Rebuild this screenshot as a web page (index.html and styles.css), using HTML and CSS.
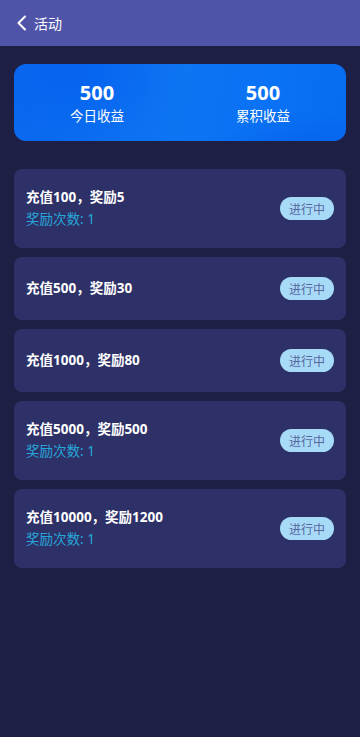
FILE: index.html
```html
<!DOCTYPE html>
<html lang="zh-CN">
<head>
<meta charset="utf-8">
<meta name="viewport" content="width=device-width, initial-scale=1">
<title>活动</title>
<link rel="stylesheet" href="styles.css">
</head>
<body>
<header class="topbar">
  <svg class="back" width="12" height="16" viewBox="0 0 12 16"><path d="M9 1.5 L2.5 8 L9 14.5" fill="none" stroke="#fff" stroke-width="2" stroke-linecap="round" stroke-linejoin="round"/></svg>
  <span class="title">活动</span>
</header>
<main class="content">
  <section class="banner">
    <div class="stat"><div class="num">500</div><div class="label">今日收益</div></div>
    <div class="stat"><div class="num">500</div><div class="label">累积收益</div></div>
  </section>
  <ul class="list">
    <li class="item"><div class="info"><div class="name">充值100，奖励5</div><div class="sub">奖励次数: 1</div></div><span class="badge">进行中</span></li>
    <li class="item"><div class="info"><div class="name">充值500，奖励30</div></div><span class="badge">进行中</span></li>
    <li class="item"><div class="info"><div class="name">充值1000，奖励80</div></div><span class="badge">进行中</span></li>
    <li class="item"><div class="info"><div class="name">充值5000，奖励500</div><div class="sub">奖励次数: 1</div></div><span class="badge">进行中</span></li>
    <li class="item"><div class="info"><div class="name">充值10000，奖励1200</div><div class="sub">奖励次数: 1</div></div><span class="badge">进行中</span></li>
  </ul>
</main>
</body>
</html>
```
FILE: styles.css
```css
* { box-sizing: border-box; }
html, body { margin: 0; padding: 0; }
body {
  background: #1d1f45;
  min-height: 737px;
  font-family: "Noto Sans", "Noto Sans CJK SC", sans-serif;
  color: #fff;
}
.topbar {
  height: 46px;
  background: #5054a9;
  display: flex;
  align-items: center;
  padding-left: 16px;
}
.back { margin-right: 6px; }
.title { font-size: 14px; color: #fff; }
.content { padding: 18px 14px; }
.banner {
  height: 77px;
  border-radius: 12px;
  display: flex;
  align-items: center;
  background:
    radial-gradient(ellipse 160px 90px at 290px 110px, rgba(0,80,230,0.55), rgba(0,80,230,0) 70%),
    radial-gradient(ellipse 140px 110px at 60px 10px, rgba(0,90,240,0.5), rgba(0,90,240,0) 70%),
    linear-gradient(100deg, #0a68ee 0%, #0d74f2 50%, #0a72f4 75%, #066cf0 100%);
}
.stat { flex: 1; text-align: center; }
.num { font-size: 20px; font-weight: 700; line-height: 24px; padding-top: 2px; }
.label { font-size: 13.5px; line-height: 20px; margin-top: 1px; }
.list { list-style: none; margin: 28px 0 0; padding: 0; display: flex; flex-direction: column; gap: 9px; }
.item {
  background: #2e3168;
  border-radius: 8px;
  padding: 0 12px;
  display: flex;
  align-items: center;
  justify-content: space-between;
  min-height: 63px;
}
.info { display: flex; flex-direction: column; padding: 19px 0; }
.name { font-size: 13.5px; font-weight: 700; line-height: 19px; height: 19px; }
.sub { font-size: 13.5px; line-height: 19px; height: 19px; margin-top: 3px; color: #26a8d8; }
.badge {
  height: 23px;
  width: 54px;
  border-radius: 12px;
  background: #a7daf6;
  color: #5867a0;
  font-size: 12px;
  display: flex;
  align-items: center;
  justify-content: center;
}
```
